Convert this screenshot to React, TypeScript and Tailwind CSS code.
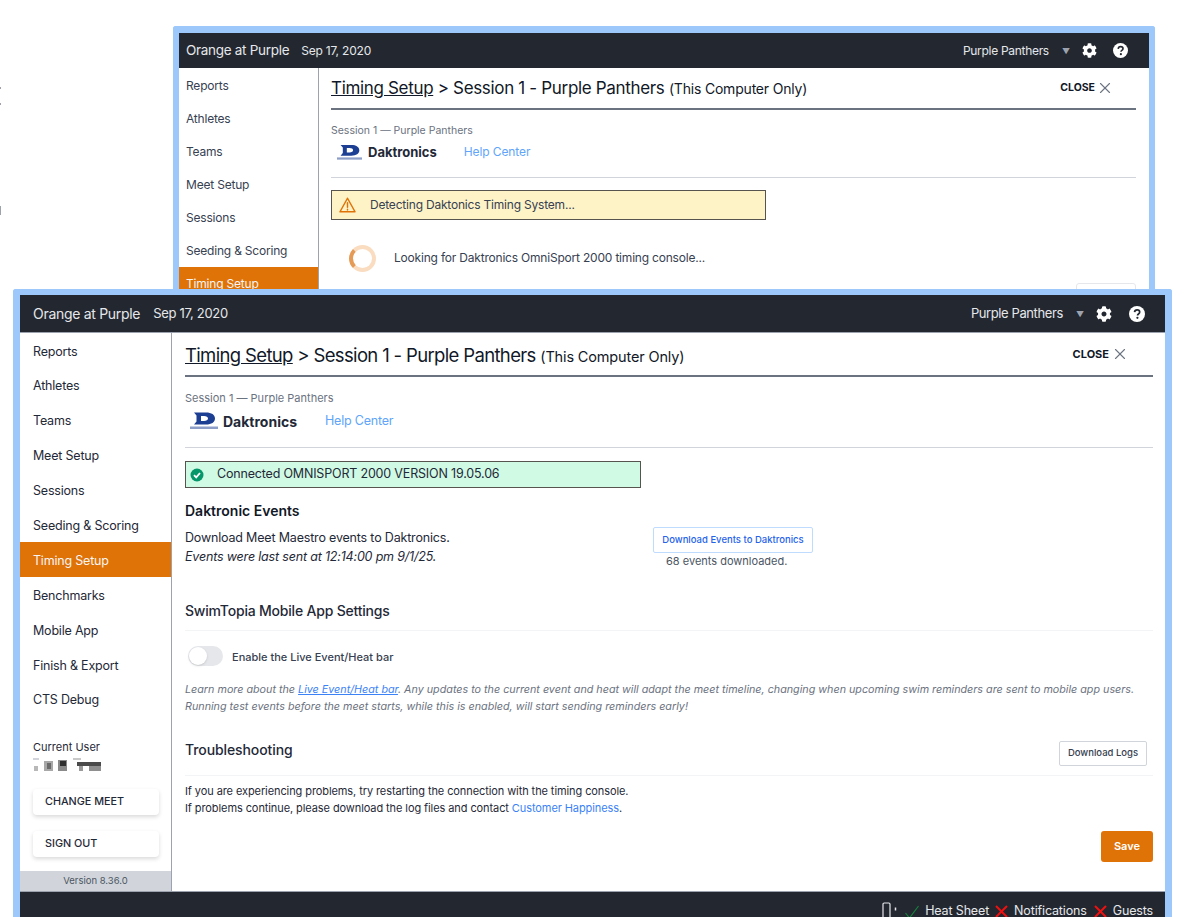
import { X } from 'lucide-react';

const BACK_NAV = ['Reports', 'Athletes', 'Teams', 'Meet Setup', 'Sessions', 'Seeding & Scoring', 'Timing Setup'];
const FRONT_NAV = [
  'Reports',
  'Athletes',
  'Teams',
  'Meet Setup',
  'Sessions',
  'Seeding & Scoring',
  'Timing Setup',
  'Benchmarks',
  'Mobile App',
  'Finish & Export',
  'CTS Debug',
];

function Gear({ size }: { size: number }) {
  return (
    <svg width={size} height={size} viewBox="0 0 512 512" fill="#fff">
      <path d="M487.4 315.7l-42.6-24.6c4.3-23.2 4.3-47 0-70.2l42.6-24.6c4.900-2.800 7.100-8.600 5.500-14-11.100-35.600-30-67.800-54.700-94.600-3.800-4.100-10-5.100-14.800-2.300L380.800 110c-17.900-15.400-38.500-27.300-60.800-35.100V25.800c0-5.600-3.900-10.500-9.400-11.700-36.700-8.200-74.300-7.800-109.200 0-5.500 1.200-9.400 6.100-9.400 11.700V75c-22.200 7.900-42.800 19.800-60.800 35.100L88.700 85.500c-4.900-2.800-11-1.900-14.800 2.300-24.700 26.700-43.600 58.900-54.700 94.600-1.700 5.400.6 11.200 5.500 14L67.300 221c-4.300 23.200-4.300 47 0 70.200l-42.600 24.600c-4.900 2.800-7.100 8.600-5.500 14 11.100 35.600 30 67.800 54.700 94.600 3.800 4.100 10 5.100 14.800 2.300l42.600-24.600c17.900 15.400 38.500 27.300 60.800 35.100v49.200c0 5.600 3.900 10.500 9.400 11.700 36.700 8.200 74.300 7.800 109.200 0 5.500-1.200 9.400-6.100 9.400-11.700v-49.200c22.200-7.900 42.800-19.800 60.800-35.100l42.600 24.600c4.900 2.800 11 1.900 14.800-2.300 24.700-26.700 43.600-58.900 54.700-94.600 1.500-5.500-.7-11.300-5.600-14.100zM256 336c-44.100 0-80-35.900-80-80s35.900-80 80-80 80 35.900 80 80-35.900 80-80 80z" />
    </svg>
  );
}

function Help({ size }: { size: number }) {
  return (
    <svg width={size} height={size} viewBox="0 0 24 24">
      <circle cx="12" cy="12" r="12" fill="#fff" />
      <path d="M8.300 9.300c.2-2.200 1.800-3.500 3.900-3.500 2.200 0 3.800 1.300 3.800 3.200 0 1.400-.8 2.200-1.800 2.900-1 .7-1.400 1.100-1.400 2.200" fill="none" stroke="#23272f" strokeWidth="2.600" />
      <circle cx="12.600" cy="17.800" r="1.700" fill="#23272f" />
    </svg>
  );
}

function DakLogo({ className }: { className: string }) {
  return (
    <svg viewBox="0 0 28 18" className={className}>
      <path d="M4 0.500h12c5.500 0 9 2.300 9 6s-3.500 6-9 6H4l2.500-3v-6zM11 4v5h3c2.500 0 4-1 4-2.500S16.500 4 14 4z" fill="#1c3f94" fillRule="evenodd" />
      <rect x="0" y="14.500" width="28" height="2.500" fill="#1c3f94" opacity="0.5" />
    </svg>
  );
}

function BackWindow() {
  return (
    <div className="absolute left-[173px] top-[26px] w-[982px] h-[280px] border-x-[6px] border-t-[7px] border-[#9cc8fb] rounded-t-[3px] bg-white overflow-hidden">
      <header className="h-[35px] bg-[#23272f] flex items-center pl-[7px] pr-[21px] text-[#e5e7eb]">
        <span className="text-[13.500px] tracking-[-0.3px]">Orange at Purple</span>
        <span className="text-[12px] tracking-[-0.2px] ml-[12px]">Sep 17, 2020</span>
        <span className="ml-auto text-[12px] tracking-[-0.3px]">Purple Panthers</span>
        <span className="ml-[13px] mr-[12px] text-[8px] text-[#9ca3af]">▼</span>
        <Gear size={15} />
        <span className="ml-[16px]">
          <Help size={15} />
        </span>
      </header>
      <div className="flex">
        <nav className="w-[140px] shrink-0 border-r border-[#9ca3af] pt-px h-[240px]">
          {BACK_NAV.map((item) => (
            <div
              key={item}
              className={`h-[33px] flex items-center pl-[7px] pt-[1px] text-[12px] tracking-[-0.2px] ${
                item === 'Timing Setup' ? 'bg-[#e07308] text-[#f5f5f4]' : 'text-[#374151]'
              }`}
            >
              {item}
            </div>
          ))}
        </nav>
        <main className="flex-1 pl-[12px] pr-[13px]">
          <div className="h-[42px] flex items-center border-b-2 border-[#6b7280]">
            <h1 className="text-[17px] tracking-[-0.33px] text-[#111827] mt-[1px]">
              <span className="underline">Timing Setup</span> {'>'} Session 1 - Purple Panthers{' '}
              <span className="text-[14px] tracking-[-0.2px]">(This Computer Only)</span>
            </h1>
            <span className="ml-auto text-[10.500px] font-bold text-[#111827] mb-[1px]">CLOSE</span>
            <X size={18} strokeWidth={1.500} className="text-[#6b7280] ml-px mr-[22px]" />
          </div>
          <p className="text-[10.500px] text-[#6b7280] mt-[13px]">Session 1 — Purple Panthers</p>
          <div className="flex items-center mt-[5px] pl-[6px] h-[17px]">
            <DakLogo className="w-[25px] h-[17px]" />
            <span className="ml-[6px] text-[13px] font-bold text-[#1f2937]">Daktronics</span>
            <span className="ml-[27px] text-[12px] tracking-[-0.1px] text-[#60a5fa]">Help Center</span>
          </div>
          <div className="border-b border-[#d1d5db] mt-[16px]" />
          <div className="mt-[12px] w-[435px] h-[30px] flex items-center bg-[#fef3c7] border border-[#57534e] pl-[6px]">
            <svg width="19" height="18" viewBox="0 0 24 24" fill="none" stroke="#e07308" strokeWidth="2" strokeLinejoin="round">
              <path d="M12 3 2 21h20z" />
              <path d="M12 9v6M12 17.500v1" strokeLinecap="round" />
            </svg>
            <span className="ml-[13px] text-[12px] tracking-[-0.2px] text-[#374151]">Detecting Daktonics Timing System...</span>
          </div>
          <div className="flex items-center mt-[25px] pl-[18px]">
            <span className="w-[27px] h-[27px] rounded-full border-[4px] border-[#fadcc0] border-l-[#e59a55]" />
            <span className="ml-[18px] text-[12px] tracking-[-0.2px] text-[#374151]">Looking for Daktronics OmniSport 2000 timing console...</span>
          </div>
          <div className="flex justify-end mt-[11px]">
            <span className="w-[60px] h-[24px] border border-[#e5e7eb] rounded-[3px]" />
          </div>
        </main>
      </div>
    </div>
  );
}

function FrontWindow() {
  return (
    <div className="absolute left-[13px] top-[289px] w-[1159px] h-[640px] border-x-[7px] border-t-[6px] border-[#9cc8fb] rounded-t-[3px] bg-white overflow-hidden">
      <header className="h-[38px] bg-[#23272f] flex items-center pl-[13px] pr-[20px] text-[#e5e7eb] border-b border-[#9ca3af]">
        <span className="text-[14px] tracking-[-0.3px]">Orange at Purple</span>
        <span className="text-[13px] tracking-[-0.3px] ml-[13px]">Sep 17, 2020</span>
        <span className="ml-auto text-[13px] tracking-[-0.4px]">Purple Panthers</span>
        <span className="ml-[13px] mr-[12px] text-[8px] text-[#9ca3af]">▼</span>
        <Gear size={16} />
        <span className="ml-[17px]">
          <Help size={16} />
        </span>
      </header>
      <div className="flex h-[558px]">
        <nav className="w-[152px] shrink-0 border-r border-[#9ca3af] flex flex-col">
          {FRONT_NAV.map((item) => (
            <div
              key={item}
              className={`h-[34.900px] shrink-0 flex items-center pl-[13px] pt-[3px] text-[12.500px] tracking-[-0.2px] ${
                item === 'Timing Setup' ? 'bg-[#e07308] text-[#f5f5f4]' : 'text-[#1f2937]'
              }`}
            >
              {item}
            </div>
          ))}
          <div className="pl-[13px] mt-[22px] text-[11px] text-[#1f2937]">Current User</div>
          <svg width="70" height="13" viewBox="0 0 70 13" className="ml-[13px] mt-[3px] shrink-0">
            <rect x="0" y="0" width="6" height="2" fill="#d1d5db" />
            <rect x="1" y="8" width="4" height="5" fill="#b8b8b8" />
            <rect x="11" y="3" width="9" height="10" fill="#a8a8a8" />
            <rect x="14" y="5" width="4" height="6" fill="#6b6b6b" />
            <rect x="25" y="2" width="9" height="11" fill="#8a8a8a" />
            <rect x="27" y="3" width="6" height="5" fill="#2f2f2f" />
            <rect x="40" y="0" width="8" height="2" fill="#c8c8c8" />
            <rect x="44" y="4" width="24" height="4" fill="#4b4b4b" />
            <rect x="46" y="8" width="4" height="5" fill="#9a9a9a" />
            <rect x="56" y="8" width="12" height="5" fill="#8f8f8f" />
          </svg>
          <button className="mx-[13px] mt-[18px] h-[26px] w-[126px] shrink-0 rounded-[4px] bg-white shadow-[0_2px_4px_rgba(0,0,0,0.15)] text-left pl-[12px] text-[10.800px] font-medium text-[#1f2937]">
            CHANGE MEET
          </button>
          <button className="mx-[13px] mt-[16px] h-[26px] w-[126px] shrink-0 rounded-[4px] bg-white shadow-[0_2px_4px_rgba(0,0,0,0.15)] text-left pl-[12px] text-[10.800px] font-medium text-[#1f2937]">
            SIGN OUT
          </button>
          <div className="mt-auto h-[20px] bg-[#d1d5db] flex items-center justify-center text-[9.500px] text-[#4b5563]">
            Version 8.36.0
          </div>
        </nav>
        <main className="flex-1 pl-[13px] pr-[12px] relative">
          <div className="h-[44px] flex items-center border-b-2 border-[#6b7280]">
            <h1 className="text-[18.500px] tracking-[-0.65px] text-[#111827] mt-[3px]">
              <span className="underline">Timing Setup</span> {'>'} Session 1 - Purple Panthers{' '}
              <span className="text-[14.500px] tracking-[-0.15px]">(This Computer Only)</span>
            </h1>
            <span className="ml-auto text-[11px] font-bold text-[#111827]">CLOSE</span>
            <X size={18} strokeWidth={1.500} className="text-[#6b7280] ml-[2px] mr-[24px]" />
          </div>
          <p className="text-[11px] leading-[14px] text-[#6b7280] mt-[14px]">Session 1 — Purple Panthers</p>
          <div className="flex items-center mt-[7px] pl-[5px] h-[18px]">
            <DakLogo className="w-[28px] h-[18px]" />
            <span className="ml-[5px] text-[14px] font-bold text-[#1f2937]">Daktronics</span>
            <span className="ml-[28px] text-[12.500px] tracking-[-0.2px] text-[#60a5fa]">Help Center</span>
          </div>
          <div className="border-b border-[#d1d5db] mt-[17px]" />
          <div className="mt-[13px] w-[456px] h-[27px] flex items-center bg-[#d1fae5] border border-[#57534e] pl-[4px]">
            <svg width="14" height="14" viewBox="0 0 14 14">
              <circle cx="7" cy="7" r="6.500" fill="#059669" />
              <path d="M4 7.200 6.200 9.400 10 5" fill="none" stroke="#fff" strokeWidth="1.800" />
            </svg>
            <span className="ml-[13px] text-[12.500px] tracking-[-0.18px] text-[#1f2937]">Connected OMNISPORT 2000 VERSION 19.05.06</span>
          </div>
          <h2 className="text-[14px] font-semibold text-[#111827] mt-[14px] leading-[18px]">Daktronic Events</h2>
          <div className="flex">
            <div className="w-[468px] pt-[8px] text-[12.500px] leading-[19px] tracking-[-0.18px] text-[#1f2937]">
              <p>Download Meet Maestro events to Daktronics.</p>
              <p className="italic">Events were last sent at 12:14:00 pm 9/1/25.</p>
            </div>
            <div className="w-[160px]">
              <button className="mt-[7px] w-[160px] h-[26px] pt-px border border-[#bfdbfe] rounded-[2px] text-[9.500px] font-medium text-[#2563eb]">
                Download Events to Daktronics
              </button>
              <p className="text-[11px] leading-[14px] text-[#4b5563] pl-[13px] mt-px">68 events downloaded.</p>
            </div>
          </div>
          <h2 className="text-[14px] tracking-[-0.2px] font-medium text-[#1f2937] mt-[33px] leading-[20px] pb-[9px] border-b border-[#f3f4f6]">
            SwimTopia Mobile App Settings
          </h2>
          <div className="flex items-center mt-[15px] pl-[3px]">
            <span className="w-[35px] h-[20px] rounded-full bg-[#e5e7eb] flex items-center">
              <span className="w-[18px] h-[18px] ml-px rounded-full bg-white shadow" />
            </span>
            <span className="ml-[9px] mt-[2px] text-[11px] font-medium text-[#374151]">Enable the Live Event/Heat bar</span>
          </div>
          <p className="text-[10.750px] leading-[17px] italic text-[#6b7280] mt-[15px]">
            Learn more about the <span className="underline text-[#3b82f6]">Live Event/Heat bar</span>. Any updates to the
            current event and heat will adapt the meet timeline, changing when upcoming swim reminders are sent to mobile app
            users. Running test events before the meet starts, while this is enabled, will start sending reminders early!
          </p>
          <div className="flex items-end mt-[25px] pb-[9px] border-b border-[#f3f4f6]">
            <h2 className="text-[14px] tracking-[-0.1px] font-medium text-[#1f2937] leading-[20px] mb-[6px]">Troubleshooting</h2>
            <button className="ml-auto mr-[6px] w-[88px] h-[25px] border border-[#d1d5db] rounded-[2px] text-[9.500px] font-medium text-[#374151]">
              Download Logs
            </button>
          </div>
          <div className="mt-[7px] text-[11px] leading-[17px] tracking-[-0.09px] text-[#1f2937]">
            <p>If you are experiencing problems, try restarting the connection with the timing console.</p>
            <p>
              If problems continue, please download the log files and contact{' '}
              <span className="text-[#3b82f6]">Customer Happiness</span>.
            </p>
          </div>
          <div className="flex justify-end mt-[14px]">
            <button className="w-[52px] h-[31px] rounded-[3px] bg-[#e07308] text-white text-[11px] font-semibold">Save</button>
          </div>
        </main>
      </div>
      <footer className="h-[40px] bg-[#23272f] border-t border-[#9ca3af] flex items-start justify-end pr-[12px] pt-[11px] text-[12.500px] leading-[16px] tracking-[-0.15px] text-[#e5e7eb]">
        <svg width="16" height="18" viewBox="0 0 16 18" fill="none" stroke="#e5e7eb" strokeWidth="1.200" className="-mt-px mr-[7px]">
          <rect x="1" y="1" width="7" height="18" rx="1.200" />
          <path d="M13.500 5.500v3" strokeWidth="1.500" />
        </svg>
        <svg width="14" height="14" viewBox="0 0 14 14" fill="none" stroke="#15803d" strokeWidth="1.200" className="mt-[2px] mr-[6px]">
          <path d="M0.500 8 4.500 13 13.500 1" />
        </svg>
        <span>Heat Sheet</span>
        <svg width="13" height="13" viewBox="0 0 13 13" fill="none" stroke="#ef1010" strokeWidth="2" className="mt-[2px] ml-[6px] mr-[6px]">
          <path d="M1 1 12 12M12 1 1 12" />
        </svg>
        <span>Notifications</span>
        <svg width="13" height="13" viewBox="0 0 13 13" fill="none" stroke="#ef1010" strokeWidth="2" className="mt-[2px] ml-[7px] mr-[6px]">
          <path d="M1 1 12 12M12 1 1 12" />
        </svg>
        <span>Guests</span>
      </footer>
    </div>
  );
}

export default function App() {
  return (
    <div className="relative w-[1185px] h-[917px] overflow-hidden bg-white font-['Inter','Liberation_Sans',sans-serif]">
      {/* specks at the edge of the photo */}
      <div className="absolute left-0 top-[87px] w-px h-[2px] bg-[#9ca3af]" />
      <div className="absolute left-0 top-[103px] w-px h-[2px] bg-[#9ca3af]" />
      <div className="absolute left-0 top-[206px] w-px h-[9px] bg-[#9ca3af]" />
      <BackWindow />
      <FrontWindow />
    </div>
  );
}
